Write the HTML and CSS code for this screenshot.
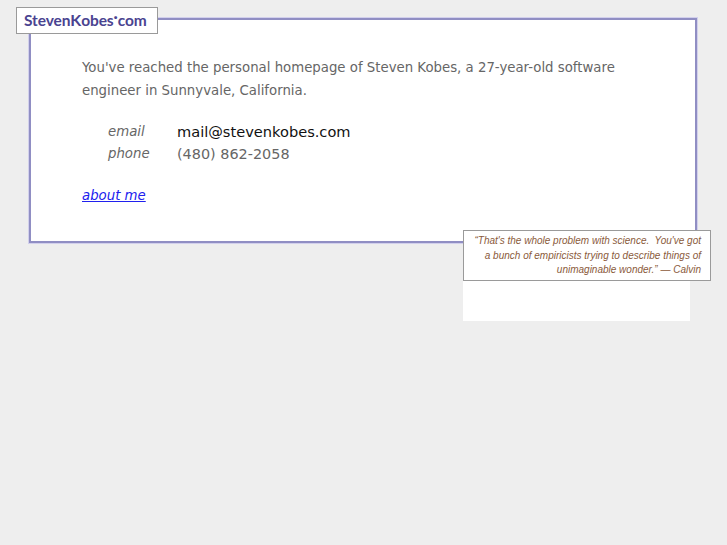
FILE: index.html
```html
<!DOCTYPE html>
<html lang="en">

<head>
    <meta charset="UTF-8">
    <title>StevenKobes.com</title>
    <link rel="stylesheet" href="styles.css">
</head>

<body>

    <div class="page">
        <div class="logo">Steven<span class="big">K</span>obes<span class="dot">&middot;</span>com</div>

        <div class="main">
            <p class="intro">You've reached the personal homepage of Steven Kobes, a 27-year-old software engineer in Sunnyvale, California.</p>

            <div class="contact">
                <div class="label">email</div>
                <div class="email">mail@stevenkobes.com</div>
                <div class="label">phone</div>
                <div class="phone">(480) 862-2058</div>
            </div>

            <a class="about" href="#">about me</a>
        </div>

        <div class="side">
            <div class="quote">&ldquo;That's the whole problem with science.&nbsp; You've got a bunch of empiricists trying to describe things of unimaginable wonder.&rdquo; &mdash; Calvin</div>
        </div>
    </div>

</body>

</html>
```

FILE: styles.css
```css
* {
    margin: 0;
    padding: 0;
    box-sizing: border-box;
}

body {
    background-color: #eeeeee;
    font-family: "DejaVu Sans", Verdana, sans-serif;
}

.page {
    position: relative;
    width: 727px;
    padding-top: 18px;
}

.logo {
    position: absolute;
    left: 16px;
    top: 7px;
    width: 142px;
    height: 27px;
    background-color: white;
    border: 1px solid #9a9a9a;
    color: #4a4390;
    font-family: Lato, "Open Sans", sans-serif;
    font-weight: bold;
    font-size: 15.5px;
    letter-spacing: -0.1px;
    line-height: 24px;
    padding-left: 7px;
    z-index: 2;
}

.logo .big {
    font-size: 16px;
}

.logo .dot {
    position: relative;
    top: -4px;
}

.main {
    margin-left: 29px;
    width: 668px;
    height: 225px;
    background-color: white;
    border: 2px solid #908ec3;
    box-shadow: 0 0 0 1px #d2d0ec;
    padding: 36px 40px 0 51px;
}

.intro {
    font-size: 13.3px;
    line-height: 23px;
    color: #666666;
    width: 570px;
}

.contact {
    display: grid;
    grid-template-columns: 69px auto;
    margin: 20px 0 0 26px;
    row-gap: 2px;
}

.label {
    font-style: italic;
    font-size: 13.3px;
    line-height: 20px;
    color: #666666;
}

.email {
    font-size: 14.6px;
    line-height: 20px;
    color: #111111;
}

.phone {
    font-size: 14.4px;
    line-height: 20px;
    color: #666666;
}

.about {
    display: inline-block;
    margin-top: 24px;
    font-size: 13.3px;
    font-style: italic;
    color: #2020ee;
}

.side {
    position: relative;
    z-index: 3;
    margin: -13px 0 0 463px;
    width: 227px;
    height: 91px;
    background-color: white;
}

.quote {
    width: 248px;
    height: 51px;
    background-color: white;
    border: 1px solid #9a9a9a;
    padding: 3px 9px 0 8px;
    text-align: right;
    font-family: "Liberation Sans", Arial, sans-serif;
    font-style: italic;
    font-size: 10px;
    line-height: 14.5px;
    color: #8a5a3a;
}
```
